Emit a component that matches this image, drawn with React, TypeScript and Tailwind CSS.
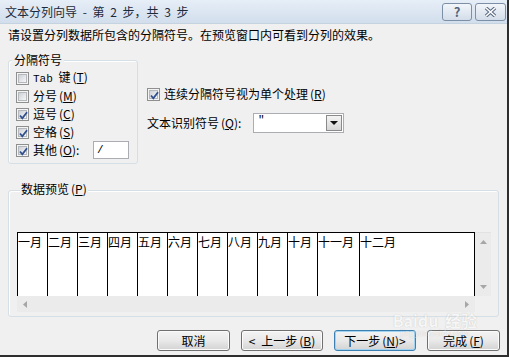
import React from 'react'

const months = ['一月', '二月', '三月', '四月', '五月', '六月', '七月', '八月', '九月', '十月']

function CheckBox({ checked }: { checked?: boolean }) {
  return (
    <span className="relative flex h-[13px] w-[13px] shrink-0 items-center justify-center border border-[#8e8f8f] bg-[#f4f4f4]">
      <span className="h-[9px] w-[9px] border border-[#b4b8bd] bg-gradient-to-br from-[#cdd1d6] to-[#f7f7f7]" />
      {checked && (
        <svg className="absolute left-[1px] top-[1px]" width="11" height="11" viewBox="0 0 11 11">
          <path d="M2 5.5 L4.3 8.3 L9 2.2" fill="none" stroke="#2f4f8f" strokeWidth="1.8" />
        </svg>
      )}
    </span>
  )
}

function Key({ k }: { k: string }) {
  return (
    <span className="ml-[2px]">
      (<u className="underline-offset-1">{k}</u>)
    </span>
  )
}

function Btn({ children, focused, w }: { children: React.ReactNode; focused?: boolean; w: string }) {
  return (
    <div
      className={
        'flex h-[21px] items-center justify-center rounded-[3px] border bg-gradient-to-b from-[#f3f3f3] via-[#e9e9e9] to-[#d3d3d3] ' +
        w +
        (focused ? ' border-[#3c7fb1] shadow-[inset_0_0_0_1px_#9fd3f1]' : ' border-[#707070] shadow-[inset_0_0_0_1px_#fbfbfb]')
      }
    >
      {children}
    </div>
  )
}

function Arrow({ dir }: { dir: 'up' | 'down' | 'left' | 'right' }) {
  const pts = {
    up: '0,4 3.5,0 7,4',
    down: '0,0 7,0 3.5,4',
    left: '4,0 4,7 0,3.5',
    right: '0,0 0,7 4,3.5',
  }[dir]
  const vertical = dir === 'up' || dir === 'down'
  return (
    <svg width={vertical ? 7 : 4} height={vertical ? 4 : 7} viewBox={vertical ? '0 0 7 4' : '0 0 4 7'}>
      <polygon points={pts} fill="#a6a6a6" />
    </svg>
  )
}

export default function App() {
  return (
    <div className="relative flex h-[357px] w-[509px] flex-col overflow-hidden border-r-2 border-b-2 border-[#2e2e2e] bg-[#f0f0f0] font-['Noto_Sans_CJK_SC','Noto_Sans',sans-serif] text-[12px] leading-[14px] text-black [word-spacing:3px]">
      {/* 标题栏 */}
      <div className="flex h-[24px] shrink-0 items-center justify-between border-b border-[#c5d2e0] bg-gradient-to-b from-[#e6eef7] to-[#d2deec] pl-[5px] pr-[1px]">
        <span className="text-[#1e2a3a]">文本分列向导 - 第 2 步，共 3 步</span>
        <div className="flex gap-[3px]">
          <div className="flex h-[18px] w-[30px] items-center justify-center rounded-[3px] border border-[#7d8fa6] bg-gradient-to-b from-[#f2f6fa] to-[#d3dde9] text-[13px] font-bold text-[#55647a] [text-shadow:0_0_1px_#fff]">
            ?
          </div>
          <div className="flex h-[18px] w-[31px] items-center justify-center rounded-[3px] border border-[#7d8fa6] bg-gradient-to-b from-[#f2f6fa] to-[#d3dde9]">
            <svg width="13" height="10" viewBox="0 0 13 10">
              <path d="M2 1 L11 9 M11 1 L2 9" stroke="#5a6a80" strokeWidth="3.6" />
              <path d="M2 1 L11 9 M11 1 L2 9" stroke="#ffffff" strokeWidth="1.6" />
            </svg>
          </div>
        </div>
      </div>

      <div className="flex flex-1 flex-col px-[8px] pt-[4px]">
        <p>请设置分列数据所包含的分隔符号。在预览窗口内可看到分列的效果。</p>

        <div className="mt-[18px] flex items-start gap-[9px]">
          {/* 分隔符号 */}
          <div className="h-[104px] w-[130px] rounded-[3px] border border-[#d5dfe5] pl-[7px] shadow-[inset_1px_1px_0_#fff]">
            <div className="-mt-[8px] ml-[-4px] w-fit bg-[#f0f0f0] px-[2px]">分隔符号</div>
            <div className="mt-[2px] flex flex-col">
              <label className="flex h-[18px] items-center gap-[4px]">
                <CheckBox />
                <span>
                  <span className="font-['Liberation_Mono',monospace] text-[11px]">Tab</span> 键<Key k="T" />
                </span>
              </label>
              <label className="flex h-[18px] items-center gap-[4px]">
                <CheckBox />
                <span>
                  分号<Key k="M" />
                </span>
              </label>
              <label className="flex h-[18px] items-center gap-[4px]">
                <CheckBox checked />
                <span>
                  逗号<Key k="C" />
                </span>
              </label>
              <label className="flex h-[18px] items-center gap-[4px]">
                <CheckBox checked />
                <span>
                  空格<Key k="S" />
                </span>
              </label>
              <div className="flex h-[18px] items-center">
                <label className="flex w-[77px] items-center gap-[4px]">
                  <CheckBox checked />
                  <span>
                    其他<Key k="O" />:
                  </span>
                </label>
                <div className="flex h-[18px] w-[36px] items-center border border-[#abadb3] bg-white pl-[3px] font-['Liberation_Mono',monospace] text-[11px]">
                  /
                </div>
              </div>
            </div>
          </div>

          {/* 右侧选项 */}
          <div className="flex flex-col">
            <label className="mt-[25px] flex h-[18px] items-center gap-[4px]">
              <CheckBox checked />
              <span>
                连续分隔符号视为单个处理<Key k="R" />
              </span>
            </label>
            <div className="mt-[10px] flex items-center">
              <span className="w-[106px]">
                文本识别符号<Key k="Q" />:
              </span>
              <div className="flex h-[20px] w-[91px] items-start border border-[#abadb3] bg-white">
                <span className="flex-1 pl-[4px] font-['Liberation_Mono',monospace] text-[11px] leading-[12px]">"</span>
                <div className="m-[1px] flex h-[16px] w-[16px] items-center justify-center border border-[#8a8a8a] bg-gradient-to-b from-[#f4f4f4] to-[#d6d6d6]">
                  <svg width="8" height="4" viewBox="0 0 8 4">
                    <polygon points="0,0 8,0 4,4" fill="#111" />
                  </svg>
                </div>
              </div>
            </div>
          </div>
        </div>

        {/* 数据预览 */}
        <div className="mt-[26px] flex w-[491px] flex-col rounded-[3px] border border-[#d5dfe5] pb-[4px] pl-[8px] shadow-[inset_1px_1px_0_#fff]">
          <div className="-mt-[9px] ml-[3px] w-fit bg-[#f0f0f0] px-[1px]">
            数据预览<Key k="P" />
          </div>
          <div className="mt-[36px] flex flex-col">
            <div className="flex">
              <div className="flex h-[64px] w-[458px] border-t border-r border-black bg-white">
                {months.map((m) => (
                  <div key={m} className="h-full w-[30px] shrink-0 border-l border-black pt-[2px]">
                    {m}
                  </div>
                ))}
                <div className="h-full w-[42px] shrink-0 border-l border-black pt-[2px]">十一月</div>
                <div className="h-full flex-1 border-l border-black pt-[2px]">十二月</div>
              </div>
              <div className="flex h-[64px] w-[16px] flex-col items-center justify-between border-t border-[#e2e2e2] bg-[#ebebeb] py-[7px]">
                <Arrow dir="up" />
                <Arrow dir="down" />
              </div>
            </div>
            <div className="flex">
              <div className="flex h-[16px] w-[458px] items-center justify-between bg-[#ebebeb] px-[6px]">
                <Arrow dir="left" />
                <Arrow dir="right" />
              </div>
              <div className="h-[16px] w-[16px] bg-[#f0f0f0]" />
            </div>
          </div>
        </div>

        {/* 按钮 */}
        <div className="-mr-[1px] mt-[13px] flex justify-end gap-[11px]">
          <Btn w="w-[73px]">取消</Btn>
          <Btn w="w-[82px]">
            &lt; 上一步<Key k="B" />
          </Btn>
          <Btn w="w-[82px]" focused>
            下一步<Key k="N" /> &gt;
          </Btn>
          <Btn w="w-[73px]">
            完成<Key k="F" />
          </Btn>
        </div>
      </div>

      {/* 水印 */}
      <div className="pointer-events-none absolute bottom-[18px] right-[30px] flex flex-col items-center opacity-40">
        <span className="text-[16px] font-bold leading-[16px] text-white [text-shadow:0_0_1px_#777]">Baidu 经验</span>
        <span className="text-[8px] leading-[9px] text-white [text-shadow:0_0_1px_#777]">jingyan.baidu.com</span>
      </div>
    </div>
  )
}
